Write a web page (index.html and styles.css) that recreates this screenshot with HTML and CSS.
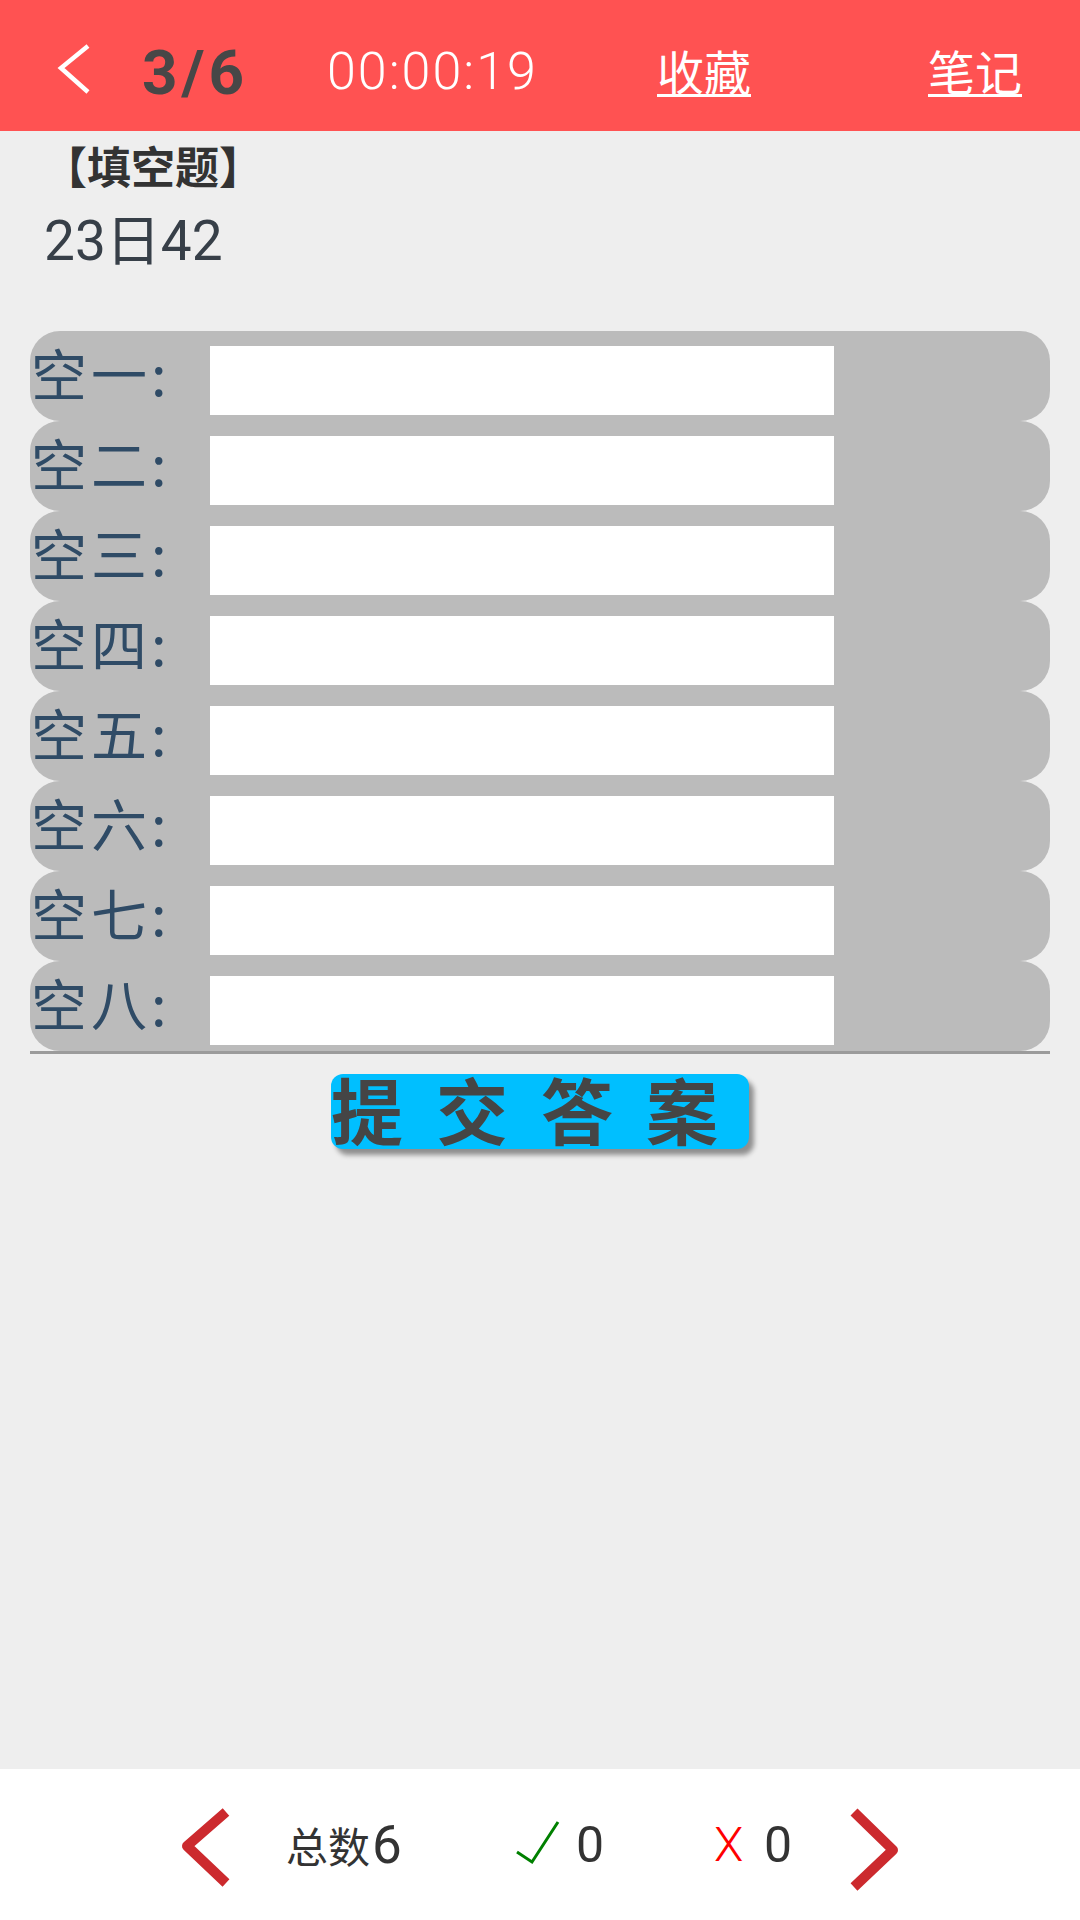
FILE: index.html
```html
<!DOCTYPE html>
<html lang="zh-CN">
<head>
<meta charset="utf-8">
<title>填空题</title>
<link rel="stylesheet" href="styles.css">
</head>
<body>
<div class="app">
  <header class="topbar">
    <svg class="back" width="36" height="52" viewBox="0 0 36 52"><polyline points="32,3 5,25 32,49" fill="none" stroke="#ffffff" stroke-width="4.5" stroke-linejoin="miter"/></svg>
    <span class="count">3/6</span>
    <span class="timer">00:00:19</span>
    <span class="link fav">收藏</span>
    <span class="link note">笔记</span>
  </header>
  <main class="main">
    <div class="qtype">【填空题】</div>
    <div class="qtext">23日42</div>
    <div class="blanks">
      <div class="blank"><span class="blank-label">空一:</span><div class="blank-input"></div></div>
      <div class="blank"><span class="blank-label">空二:</span><div class="blank-input"></div></div>
      <div class="blank"><span class="blank-label">空三:</span><div class="blank-input"></div></div>
      <div class="blank"><span class="blank-label">空四:</span><div class="blank-input"></div></div>
      <div class="blank"><span class="blank-label">空五:</span><div class="blank-input"></div></div>
      <div class="blank"><span class="blank-label">空六:</span><div class="blank-input"></div></div>
      <div class="blank"><span class="blank-label">空七:</span><div class="blank-input"></div></div>
      <div class="blank"><span class="blank-label">空八:</span><div class="blank-input"></div></div>
    </div>
    <div class="submit">提交答案</div>
  </main>
  <footer class="bottombar">
    <svg class="chev chev-l" width="60" height="90" viewBox="0 0 60 90"><polyline points="51,9 12,43 51,80" fill="none" stroke="#cc2a2e" stroke-width="10" stroke-linejoin="round"/></svg>
    <span class="total">总数<span class="big">6</span></span>
    <svg class="check" width="50" height="50" viewBox="0 0 50 50"><polyline points="5,32 20,42 46,2" fill="none" stroke="#008000" stroke-width="3"/></svg>
    <span class="zero zero1">0</span>
    <span class="wrong">X</span>
    <span class="zero zero2">0</span>
    <svg class="chev chev-r" width="60" height="90" viewBox="0 0 60 90"><polyline points="9,9 48,47 9,84" fill="none" stroke="#cc2a2e" stroke-width="10" stroke-linejoin="round"/></svg>
  </footer>
</div>
</body>
</html>
```
FILE: styles.css
```css
html, body {
  margin: 0;
  padding: 0;
}
body {
  background: #eeeeee;
  font-family: "Roboto", "Noto Sans CJK SC", sans-serif;
}
.app {
  width: 1080px;
  height: 1920px;
  display: flex;
  flex-direction: column;
  overflow: hidden;
}
.topbar {
  flex: none;
  height: 131px;
  background: #ff5252;
  display: flex;
  align-items: center;
  box-sizing: border-box;
}
.back {
  flex: none;
  margin-left: 56px;
  margin-top: 7px;
}
.count {
  flex: none;
  width: 185px;
  margin-left: 50px;
  margin-top: 15px;
  font-family: "Roboto", sans-serif;
  font-weight: 700;
  font-size: 62px;
  line-height: 62px;
  letter-spacing: 4px;
  color: #474747;
}
.timer {
  flex: none;
  width: 330px;
  margin-top: 13px;
  font-family: "Roboto", sans-serif;
  font-weight: 300;
  font-size: 52px;
  line-height: 52px;
  letter-spacing: 2px;
  color: #ffffff;
}
.link {
  flex: none;
  font-family: "Noto Sans CJK SC", sans-serif;
  font-size: 47px;
  line-height: 47px;
  color: #ffffff;
  margin-top: 7px;
  text-decoration: underline;
  text-decoration-thickness: 3px;
  text-underline-offset: 4px;
}
.fav {
  width: 271px;
}
.main {
  flex: 1;
  display: flex;
  flex-direction: column;
}
.qtype {
  margin-top: 11px;
  margin-left: 43px;
  font-family: "Noto Sans CJK SC", sans-serif;
  font-weight: 700;
  font-size: 44px;
  line-height: 46px;
  color: #333333;
}
.qtext {
  margin-top: 26px;
  margin-left: 44px;
  font-size: 55px;
  line-height: 55px;
  color: #373f48;
}
.blanks {
  margin: 62px 30px 0;
  border-bottom: 3px solid #9b9b9b;
  display: flex;
  flex-direction: column;
}
.blank {
  height: 90px;
  background: #bbbbbb;
  border-radius: 30px;
  display: flex;
  align-items: flex-start;
}
.blank-label {
  flex: none;
  width: 180px;
  box-sizing: border-box;
  padding-left: 1px;
  margin-top: 13px;
  font-family: "Noto Sans CJK SC", sans-serif;
  font-size: 56px;
  line-height: 56px;
  letter-spacing: 4px;
  color: #2f4b66;
  white-space: nowrap;
}
.blank-input {
  flex: none;
  width: 624px;
  height: 69px;
  margin-top: 15px;
  background: #ffffff;
}
.submit {
  align-self: center;
  margin-top: 20px;
  width: 418px;
  height: 75px;
  background: #00bfff;
  border-radius: 12px;
  box-shadow: 5px 6px 5px rgba(0, 0, 0, 0.4);
  font-family: "Noto Sans CJK SC", sans-serif;
  font-weight: 700;
  font-size: 72px;
  line-height: 67px;
  letter-spacing: 33px;
  color: #454545;
  white-space: nowrap;
  overflow: visible;
}
.bottombar {
  flex: none;
  height: 151px;
  background: #ffffff;
  display: flex;
  align-items: center;
}
.chev {
  flex: none;
  margin-top: 6px;
}
.chev-l {
  margin-left: 175px;
}
.total {
  flex: none;
  width: 200px;
  margin-left: 51px;
  font-family: "Noto Sans CJK SC", sans-serif;
  font-size: 42px;
  line-height: 50px;
  color: #333333;
}
.total .big {
  font-family: "Roboto", sans-serif;
  font-size: 53px;
  margin-left: 2px;
}
.check {
  flex: none;
  margin-left: 26px;
}
.zero {
  flex: none;
  font-family: "Roboto", sans-serif;
  font-size: 50px;
  line-height: 50px;
  color: #333333;
}
.zero1 {
  width: 124px;
  margin-left: 14px;
}
.wrong {
  flex: none;
  width: 40px;
  margin-left: 14px;
  font-family: "Roboto", sans-serif;
  font-weight: 300;
  font-size: 48px;
  line-height: 50px;
  color: #ff0000;
}
.zero2 {
  width: 60px;
  margin-left: 10px;
}
.chev-r {
  margin-left: 21px;
}
```
